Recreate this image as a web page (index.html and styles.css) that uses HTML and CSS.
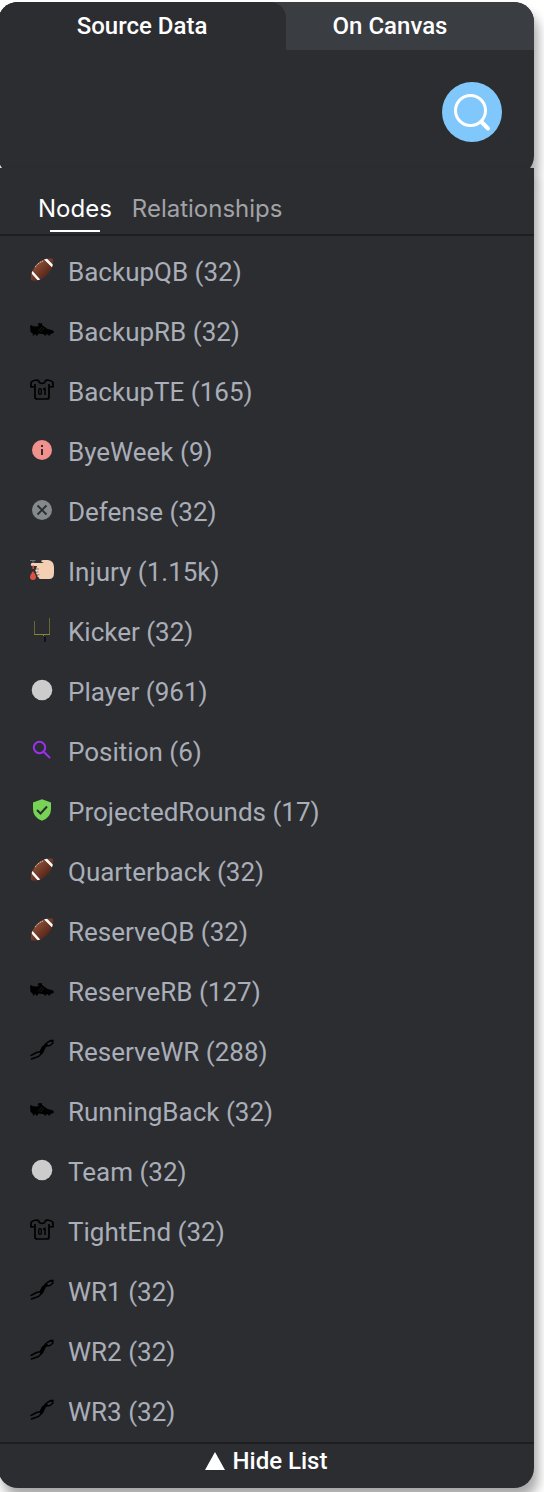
FILE: index.html
```html
<!DOCTYPE html>
<html lang="en">
<head>
    <meta charset="UTF-8">
    <meta name="viewport" content="width=device-width, initial-scale=1.0">
    <title>Source Data</title>
    <link rel="stylesheet" href="styles.css">
</head>
<body>
    <!-- Icon definitions -->
    <svg class="defs" width="0" height="0" aria-hidden="true">
        <defs>
            <linearGradient id="leather" x1="0" y1="0" x2="1" y2="1">
                <stop offset="0.15" stop-color="#94583f"/>
                <stop offset="0.55" stop-color="#6b3423"/>
                <stop offset="0.9" stop-color="#3c1a12"/>
            </linearGradient>
            <clipPath id="ball">
                <path d="M1 22C0 14 6 5 13 2C17 0.500 21 0.300 23 1C24 8 20 16 13 20C9 22.500 4 23.500 1 22Z"/>
            </clipPath>
        </defs>
        <symbol id="football" viewBox="0 0 24 24">
            <g clip-path="url(#ball)">
                <path fill="url(#leather)" d="M0 0h24v24H0z"/>
                <path stroke="#fff" stroke-width="2.500" d="M14.500 0L23.500 9M0 12L9.500 22.500"/>
                <path stroke="#d9b9a6" stroke-width="1.300" stroke-dasharray="1.500 0.700" fill="none" d="M5 9Q8 4.500 13 3"/>
            </g>
        </symbol>
        <symbol id="cleat" viewBox="0 0 24 24">
            <path d="M0 8L1.500 7L3 8.300L7 8.500L9 7.500L7.500 6.500L9 5L12.300 5.500L12 7L17.500 11L22.500 12.300Q24.500 13.500 23.500 15L20.500 16L20 17.500H18.500L18 16.300H16.500L16 17.500H14.500L14 16.300L8.500 15.500L7.500 17.500H6L5.500 16.300H4.500L4 17.500H2.800V15.500L0.500 14Z"/>
            <path stroke="#2c2d31" stroke-width="0.600" d="M12 9L8 13.500M14 10L10.500 14"/>
        </symbol>
        <symbol id="jersey" viewBox="0 0 24 24">
            <path fill="none" stroke="#000" stroke-width="1.700" stroke-linejoin="round" d="M5 8.500L1 9V5Q1.500 2.500 7 2Q8 2 8.500 3Q9.500 5.500 12 5.500Q14.500 5.500 15.500 3Q16 2 17 2Q22.500 2.500 23 5V9L19 8.500V19Q19 21 17 21H7Q5 21 5 19ZM5 8.500V6M19 8.500V6"/>
            <rect x="8.700" y="10.700" width="2.600" height="5.600" rx="1.300" fill="none" stroke="#000" stroke-width="1.300"/>
            <path fill="none" stroke="#000" stroke-width="1.500" d="M13 11.500L15 10.500V17"/>
        </symbol>
        <symbol id="info" viewBox="0 0 24 24">
            <circle cx="12" cy="12" r="10" fill="#f1908c"/>
            <path fill="#2c2d31" d="M11 7h2v2h-2zM11 11h2v6h-2z"/>
        </symbol>
        <symbol id="cross" viewBox="0 0 24 24">
            <circle cx="12" cy="12" r="10" fill="#84898c"/>
            <path stroke="#2c2d31" stroke-width="1.800" d="M7.500 7.500l9 9M16.500 7.500l-9 9"/>
        </symbol>
        <symbol id="finger" viewBox="0 0 24 24">
            <path fill="#f5cfb4" d="M1.500 5H14L11 3.500Q11 2 13 2H18Q24 3 24 9V15Q24 21 19 21H10Q8 20.500 9 19.300H8Q6.500 18 8 16.700H7Q5.500 15.500 6.500 14H6Q4.500 12.500 6 11L7 8H1.500Q0 6.500 1.500 5Z"/>
            <path fill="none" stroke="#2c2d31" stroke-width="0.500" d="M6 11h3M6.500 14h2M8 16.700h1.500"/>
            <path fill="#db5142" d="M2.500 7.500H4V11H2.500ZM3 13Q6 17 6 19Q6 22 3 22Q0 22 0 19Q0 17 3 13Z"/>
            <path fill="none" stroke="#687480" d="M0 2.500h5.500M2 4h2.500"/>
        </symbol>
        <symbol id="goal" viewBox="0 0 24 24">
            <path fill="none" stroke="#66682e" d="M4.500 3V17M19.500 0V16"/>
            <path fill="none" stroke="#89862b" d="M4 16.500H20M12.500 16.500L14 18"/>
            <path stroke="#10102c" stroke-width="2" d="M15 19V24"/>
        </symbol>
        <symbol id="dot" viewBox="0 0 24 24">
            <circle cx="12" cy="12" r="10.300" fill="#ccc"/>
        </symbol>
        <symbol id="magnifier" viewBox="0 0 24 24">
            <g fill="none" stroke="#9b2ff2" stroke-width="2">
                <circle cx="9.500" cy="9.500" r="5.700"/>
                <path d="M13.700 13.700L20 20"/>
            </g>
        </symbol>
        <symbol id="shield" viewBox="0 0 24 24">
            <path fill="#77d353" d="M12 1.300L21 4.500V11Q21 19.500 12 22.700Q3 19.500 3 11V4.500Z"/>
            <path fill="none" stroke="#2c2d31" stroke-width="2" d="M7 12l3.500 3.500L17 8.500"/>
        </symbol>
        <symbol id="receiver" viewBox="0 0 24 24">
            <circle cx="22.300" cy="3" r="1.500"/>
            <path d="M9.500 13.500L12 8.500L16 5.500L18 6.500L16 9L13.500 14L11 17Z"/>
            <path fill="none" stroke="#000" stroke-width="1.500" stroke-linecap="round" stroke-linejoin="round" d="M15 6.500L18 4L21 2.500M16 8L20 7.500L23 5M11.500 13.500L6.500 14.500L1 17.500M12.500 14.500L8.500 18.500L1.500 21"/>
        </symbol>
    </svg>

    <div class="sidebar">
        <section class="source-panel">
            <div class="tabs" role="tablist">
                <button type="button" class="tab active" role="tab" aria-selected="true">Source Data</button>
                <button type="button" class="tab" role="tab" aria-selected="false">On Canvas</button>
            </div>
            <div class="search-area">
                <button type="button" class="search-button" aria-label="Search">
                    <svg viewBox="0 0 60 60" fill="none" stroke="#fff" stroke-linecap="round">
                        <circle cx="28.500" cy="28.500" r="15" stroke-width="3"/>
                        <path d="M39.500 40L46 46.500" stroke-width="4"/>
                    </svg>
                </button>
            </div>
        </section>

        <section class="list-panel">
            <div class="subtabs" role="tablist">
                <button type="button" class="subtab active" role="tab" aria-selected="true">Nodes</button>
                <button type="button" class="subtab" role="tab" aria-selected="false">Relationships</button>
            </div>
            <ul class="node-list">
                <li><svg class="icon"><use href="#football"/></svg>BackupQB (32)</li>
                <li><svg class="icon"><use href="#cleat"/></svg>BackupRB (32)</li>
                <li><svg class="icon"><use href="#jersey"/></svg>BackupTE (165)</li>
                <li><svg class="icon"><use href="#info"/></svg>ByeWeek (9)</li>
                <li><svg class="icon"><use href="#cross"/></svg>Defense (32)</li>
                <li><svg class="icon"><use href="#finger"/></svg>Injury (1.15k)</li>
                <li><svg class="icon"><use href="#goal"/></svg>Kicker (32)</li>
                <li><svg class="icon"><use href="#dot"/></svg>Player (961)</li>
                <li><svg class="icon"><use href="#magnifier"/></svg>Position (6)</li>
                <li><svg class="icon"><use href="#shield"/></svg>ProjectedRounds (17)</li>
                <li><svg class="icon"><use href="#football"/></svg>Quarterback (32)</li>
                <li><svg class="icon"><use href="#football"/></svg>ReserveQB (32)</li>
                <li><svg class="icon"><use href="#cleat"/></svg>ReserveRB (127)</li>
                <li><svg class="icon"><use href="#receiver"/></svg>ReserveWR (288)</li>
                <li><svg class="icon"><use href="#cleat"/></svg>RunningBack (32)</li>
                <li><svg class="icon"><use href="#dot"/></svg>Team (32)</li>
                <li><svg class="icon"><use href="#jersey"/></svg>TightEnd (32)</li>
                <li><svg class="icon"><use href="#receiver"/></svg>WR1 (32)</li>
                <li><svg class="icon"><use href="#receiver"/></svg>WR2 (32)</li>
                <li><svg class="icon"><use href="#receiver"/></svg>WR3 (32)</li>
            </ul>
            <button type="button" class="hide-button">
                <svg class="arrow" viewBox="0 0 20 18"><path fill="#fff" d="M10 0L20 18H0Z"/></svg>
                Hide List
            </button>
        </section>
    </div>
</body>
</html>
```
FILE: styles.css
```css
* {
    box-sizing: border-box;
}

body {
    margin: 0;
    background-color: #fff;
    font-family: Roboto, sans-serif;
    overflow-x: hidden;
}

button {
    margin: 0;
    padding: 0;
    border: none;
    background: none;
    color: #fff;
    font-family: inherit;
    cursor: pointer;
}

.defs {
    position: absolute;
}

.sidebar {
    padding: 2px 10px 4px 0;
    margin-left: -2px;
}

/* Top panel */
.source-panel {
    background-color: #2c2d31;
    border-radius: 20px;
    box-shadow: 4px 10px 12px rgba(0, 0, 0, 0.35);
}

.tabs {
    display: grid;
    grid-template-columns: 288fr 248fr;
    background-color: #3a3d41;
    border-radius: 20px 20px 0 0;
}

.tab {
    height: 48px;
    padding-right: 40px;
    font-size: 24px;
    font-weight: 500;
}

.tab.active {
    padding-right: 0;
    background-color: #2c2d31;
    border-radius: 20px 16px 0 0;
}

.search-area {
    display: flex;
    justify-content: flex-end;
    padding: 32px 32px 34px;
}

.search-button {
    width: 60px;
    height: 60px;
    border-radius: 50%;
    background-color: #80c7fb;
}

.search-button svg {
    display: block;
}

/* Node list panel */
.list-panel {
    position: relative;
    margin-top: -8px;
    background-color: #2c2d31;
    border-radius: 0 0 20px 20px;
    box-shadow: 4px 10px 12px rgba(0, 0, 0, 0.35);
}

.subtabs {
    display: flex;
    gap: 20px;
    height: 68px;
    padding: 24px 40px 2px;
    border-bottom: 2px solid #1d1e22;
}

.subtab {
    display: flex;
    flex-direction: column;
    justify-content: space-between;
    align-items: center;
    color: #a2a3a6;
    font-family: Inter, sans-serif;
    font-size: 24px;
    line-height: 34px;
}

.subtab.active {
    color: #fff;
}

.subtab.active::after {
    content: "";
    width: 50px;
    height: 2px;
    background-color: #fff;
}

.node-list {
    margin: 0;
    padding: 6px 32px 0;
    list-style: none;
}

.node-list li {
    display: flex;
    align-items: center;
    gap: 14px;
    height: 60px;
    color: #a9aeb8;
    font-size: 26px;
}

.icon {
    width: 24px;
    height: 24px;
    margin-bottom: 4px;
}

.hide-button {
    display: flex;
    justify-content: center;
    gap: 8px;
    width: 100%;
    height: 46px;
    padding-top: 2px;
    border-top: 2px solid #1d1e22;
    font-size: 24px;
    font-weight: 500;
    line-height: 30px;
}

.arrow {
    width: 20px;
    height: 18px;
    margin-top: 6px;
}
```
